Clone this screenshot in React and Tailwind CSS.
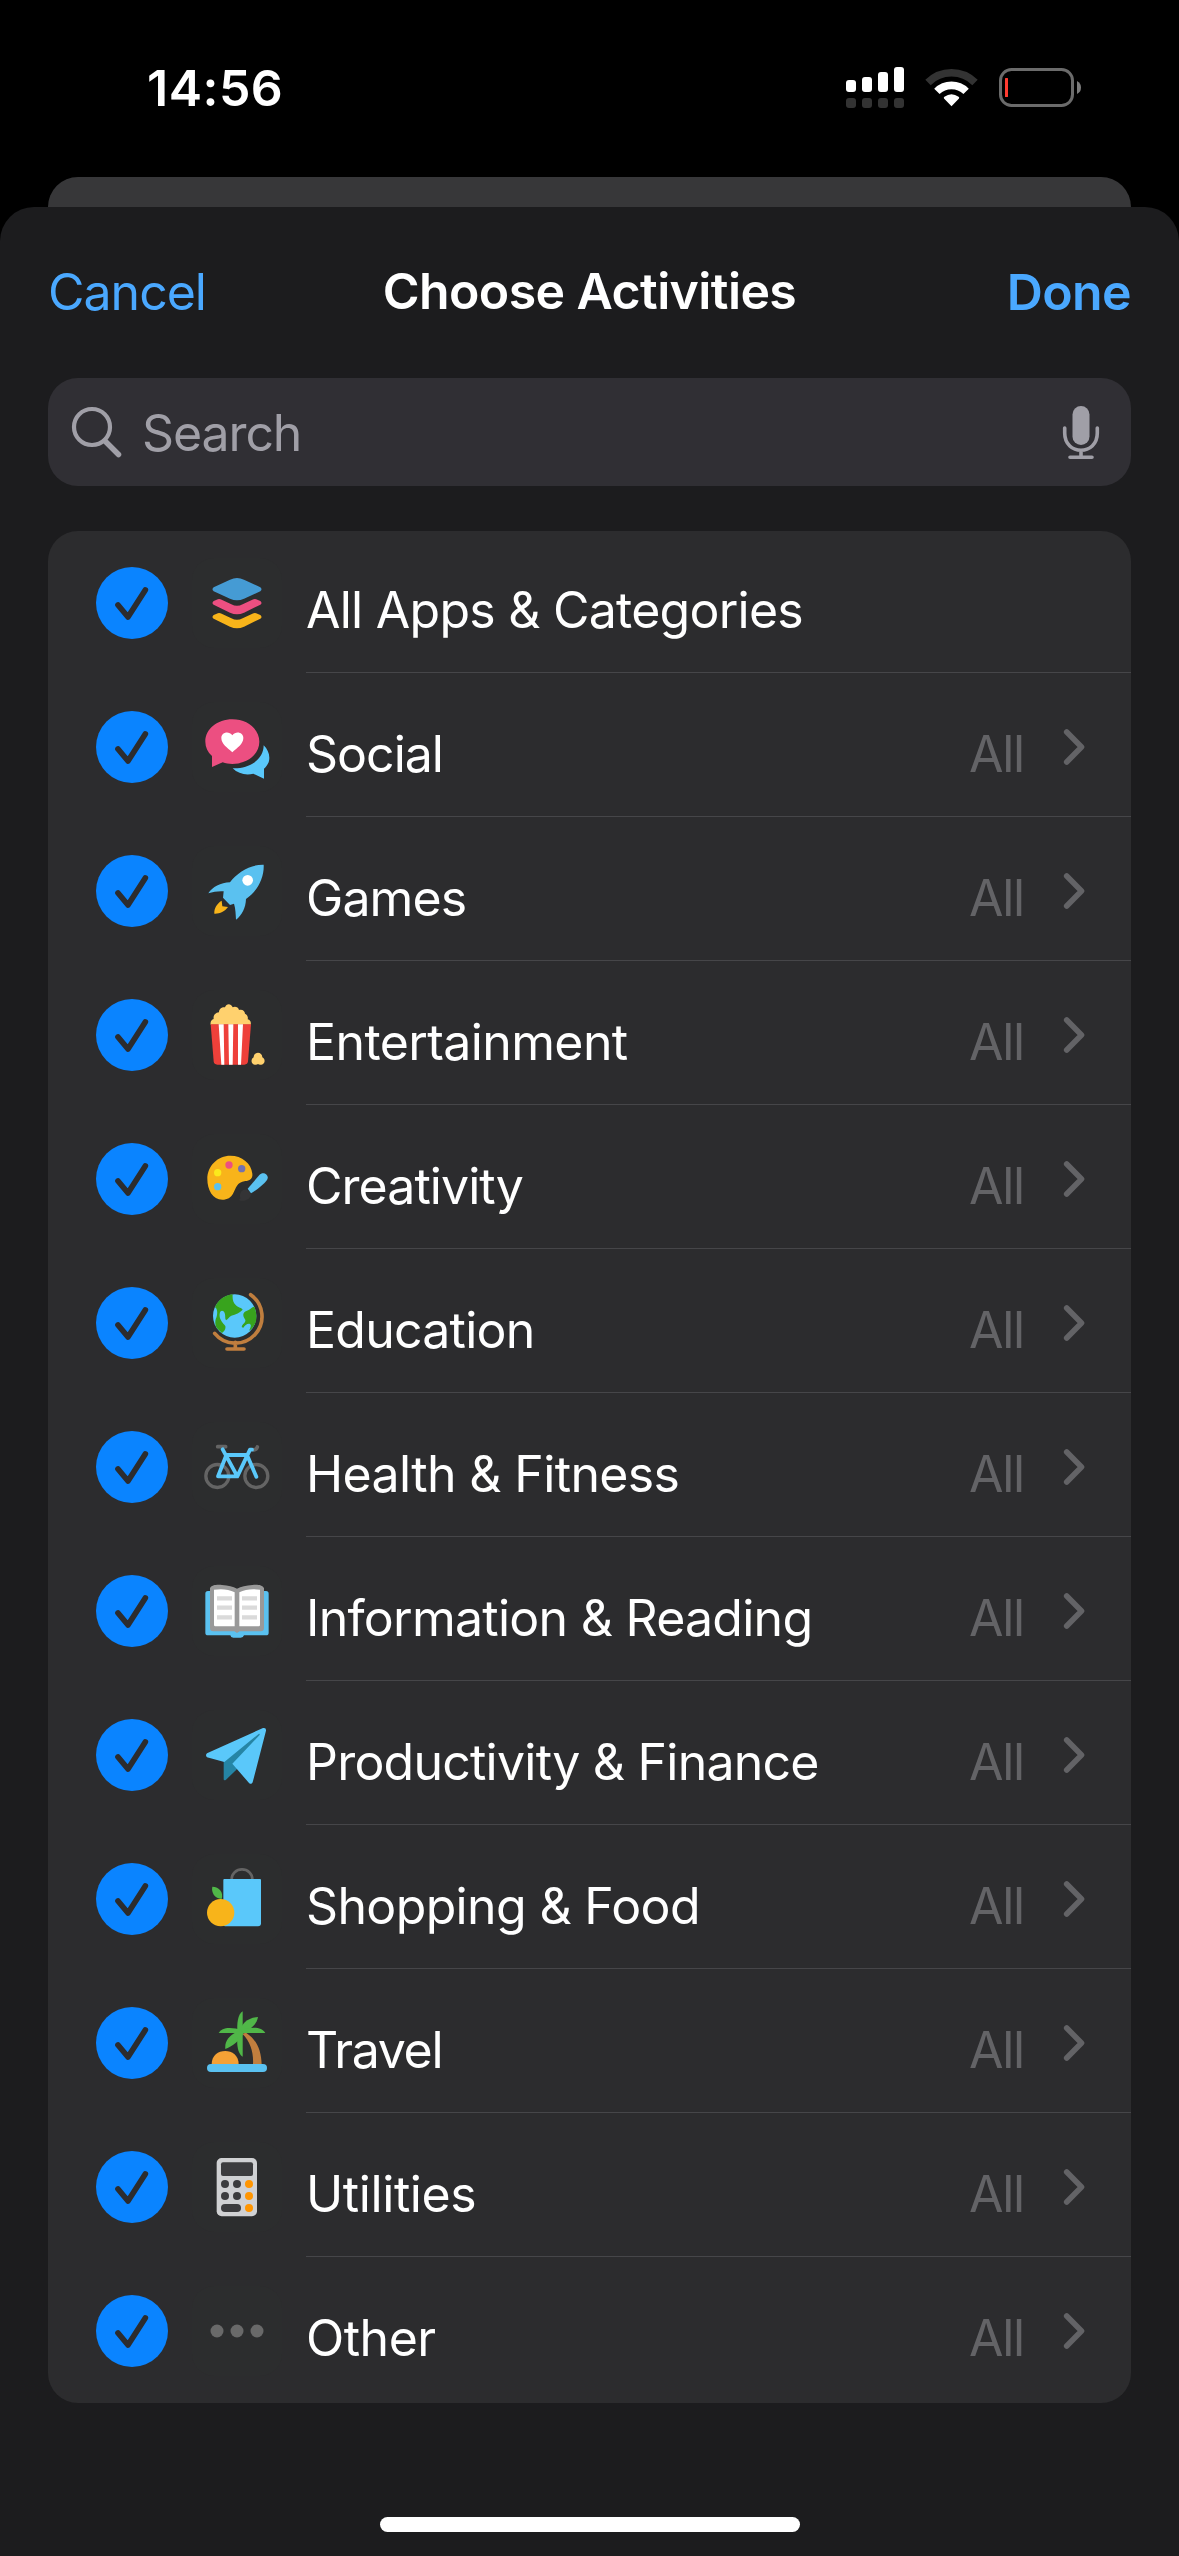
import { useState } from "react";

const CATEGORIES = [
  { id: "all", name: "All Apps & Categories", tracking: "tracking-[-0.75px]" },
  { id: "social", name: "Social", value: "All", tracking: "tracking-[-1px]" },
  { id: "games", name: "Games", value: "All", tracking: "tracking-[-0.9px]" },
  { id: "entertainment", name: "Entertainment", value: "All", tracking: "tracking-[-0.6px]" },
  { id: "creativity", name: "Creativity", value: "All", tracking: "tracking-[-0.95px]" },
  { id: "education", name: "Education", value: "All", tracking: "tracking-[-0.75px]" },
  { id: "health", name: "Health & Fitness", value: "All", tracking: "tracking-[-0.63px]" },
  { id: "reading", name: "Information & Reading", value: "All", tracking: "tracking-[-0.74px]" },
  { id: "productivity", name: "Productivity & Finance", value: "All", tracking: "tracking-[-0.77px]" },
  { id: "shopping", name: "Shopping & Food", value: "All", tracking: "tracking-[-0.65px]" },
  { id: "travel", name: "Travel", value: "All", tracking: "tracking-[-1.3px]" },
  { id: "utilities", name: "Utilities", value: "All", tracking: "tracking-[-0.4px]" },
  { id: "other", name: "Other", value: "All", tracking: "tracking-[-0.5px]" },
];

const ICONS = {
  all: {
    viewBox: "456 114 270 270",
    art: (
      <>
        <path fill="#459bd4" d="M521 202 570 179Q591 169 612 179L661 202Q668 208 661 214L612 236Q591 246 570 236L521 214Q514 208 521 202Z" />
        <path fill="#ec4f81" d="M530 239Q537 235 545 239L574 253Q591 262 608 253L637 239Q645 235 652 239L661 243Q668 249 661 254L612 278Q591 287 570 278L521 254Q514 249 521 243Z" />
        <path fill="#f8b41a" d="M530 281Q537 277 545 281L574 295Q591 304 608 295L637 281Q645 277 652 281L661 285Q668 291 661 296L612 320Q591 329 570 320L521 296Q514 291 521 285Z" />
      </>
    ),
  },
  social: {
    viewBox: "6 6 270 270",
    art: (
      <>
        <path fill="#ec4f81" d="M127 58C172 58 208 87 208 125S172 192 127 192C117 192 107 190 98 187L66 201V168C53 156 46 141 46 125 46 87 82 58 127 58Z" />
        <path fill="#fff" d="M127 157C112 143 94 132 94 114 94 97 116 91 127 106 138 91 160 97 160 114 160 132 142 143 127 157Z" />
        <path fill="#5ac8fa" d="M221 136C232 147 238 160 238 173 238 187 232 197 222 206V236L190 221C168 227 144 221 128 205 176 207 221 180 221 136Z" />
      </>
    ),
  },
  games: {
    viewBox: "6 438 270 270",
    art: (
      <>
        <path fill="#5ac1f0" d="M221 494C223 529 205 572 168 597 167 624 156 646 138 659 137 642 137 628 132 611L120 615 99 593 101 574C86 573 70 575 55 580 67 561 92 548 120 547 143 515 184 493 221 494Z" />
        <circle cx="173" cy="541" r="16" fill="#fff" />
        <path fill="#f8b41a" d="M95 602 97 619 114 621C104 635 88 642 73 641 72 625 81 610 95 602Z" />
      </>
    ),
  },
  entertainment: {
    viewBox: "6 30 270 270",
    art: (
      <>
        <path fill="#ffd16e" d="M62 134C60 125 65 119 71 117 69 107 76 98 87 97 87 87 95 80 105 82 109 70 123 70 128 82 136 78 145 82 147 90 157 87 165 93 165 101 172 104 175 111 173 118 181 120 184 126 182 134Z" />
        <path fill="#ee403a" d="M62 133H183L174 244Q173 254 163 254H82Q72 254 71 244Z" />
        <path fill="#fff" d="M86 133H101L103 254H94ZM115 133H130L128 254H117ZM144 133H159L153 254H144Z" />
        <path fill="#ffd16e" d="M191 232C191 214 217 214 217 232 227 237 226 252 214 254 210 255 206 254 204 252 202 254 198 255 194 254 182 252 182 237 191 232Z" />
      </>
    ),
  },
  creativity: {
    viewBox: "6 462 270 270",
    art: (
      <>
        <path fill="#f8b41a" d="M187 581C189 597 178 602 166 603 139 607 139 624 129 641 123 652 112 659 97 659 68 659 52 630 52 597 52 557 84 527 121 527 156 527 184 550 187 581Z" />
        <circle cx="117" cy="555" r="11" fill="#ec4f81" />
        <circle cx="155" cy="566" r="11" fill="#7272b0" />
        <circle cx="83" cy="578" r="11" fill="#fbe91c" />
        <circle cx="83" cy="620" r="11" fill="#5ac1f0" />
        <path fill="#5ac1f0" d="M173 626 208 585C220 572 240 586 231 600 221 614 202 628 183 640Z" />
        <path fill="#343436" d="M170 628 183 641C183 653 172 664 151 662 147 661 147 658 151 655 146 638 158 628 170 628Z" />
      </>
    ),
  },
  education: {
    viewBox: "6 24 270 270",
    art: (
      <>
        <circle cx="134" cy="138" r="65" fill="#5ac8fa" />
        <path fill="#38a31d" d="M128 73C102 75 83 92 75 112 84 117 83 135 77 148 74 160 77 171 83 177L96 189C103 184 108 177 106 168 98 158 87 148 89 132 90 120 100 119 104 129 107 137 104 145 108 151 115 147 117 140 124 137 137 134 150 128 158 119 155 113 146 114 137 105 129 97 127 87 128 73ZM193 110C199 122 201 145 197 157 191 172 184 180 177 182 183 173 185 163 178 161 171 160 164 166 160 173 153 174 155 168 159 163 167 156 168 151 164 146 157 137 158 126 171 122 181 119 187 109 193 110Z" />
        <path fill="none" stroke="#c07e3e" strokeWidth="11" strokeLinecap="round" d="M182 74A80 80 0 1 1 74 190M136 217V237M111 237H162" />
      </>
    ),
  },
  health: {
    viewBox: "6 456 270 270",
    art: (
      <g fill="none" strokeLinejoin="round" strokeLinecap="round">
        <g stroke="#646464" strokeWidth="10">
          <circle cx="82" cy="618" r="34.5" />
          <circle cx="199" cy="618" r="34.5" />
          <path strokeWidth="11" d="M83 530H107M189 539Q199 541 202 531" />
        </g>
        <path stroke="#5ac8fa" strokeWidth="11.5" d="M98 538 142 619H84L109 555H171L199 620M142 619 180 539H186" />
      </g>
    ),
  },
  reading: {
    viewBox: "6 18 270 270",
    art: (
      <>
        <path fill="#5ac1f0" d="M54 93H228Q236 93 236 101V218Q236 226 228 226H162Q160 233 152 233H130Q122 233 121 226H54Q46 226 46 218V101Q46 93 54 93Z" />
        <path fill="#999" d="M60 85C64 74 82 74 96 75 115 76 129 80 141 86 153 80 169 76 187 75 202 74 217 74 222 85V204Q222 214 212 214H149L141 219 133 214H70Q60 214 60 204Z" />
        <path fill="#fff" d="M72 89C94 86 116 87 134 97V199H76Q72 199 72 195ZM148 97C166 87 188 86 210 89V195Q210 199 206 199H148Z" />
        <path stroke="#dadada" strokeWidth="13" d="M81 115H126M81 143H126M81 172H126M156 115H201M156 143H201M156 172H201" />
      </>
    ),
  },
  productivity: {
    viewBox: "6 450 270 270",
    art: (
      <>
        <path fill="#2585a5" d="M101 602 205 518 213 524 139 629 108 659Q101 664 101 656Z" />
        <path fill="#5ac8fa" d="M219 504Q229 502 228 512L188 667Q184 675 177 669L127 611 208 526Q211 522 207 521L103 606 51 592Q45 586 51 580Z" />
      </>
    ),
  },
  shopping: {
    viewBox: "6 12 270 270",
    art: (
      <>
        <path fill="none" stroke="#646464" strokeWidth="8" d="M125 92V87A31 29 0 0 1 187 87V92" />
        <path fill="#5ac8fa" d="M103 87H210Q213 87 213 90V220Q213 229 204 229H108Q100 229 100 221V90Q100 87 103 87Z" />
        <circle cx="92" cy="188" r="41" fill="#f8b41a" />
        <path fill="#50b748" d="M67 110C88 110 101 127 95 147 74 145 63 128 67 110Z" />
      </>
    ),
  },
  travel: {
    viewBox: "6 444 270 270",
    art: (
      <>
        <path fill="#c07e3e" d="M157 551 168 548C200 568 214 602 215 643H189C191 606 181 575 157 551Z" />
        <path fill="#f5a135" d="M65 643C64 590 147 590 146 643Z" />
        <rect x="51" y="642" width="180" height="24" rx="12" fill="#5ac1f0" />
        <g fill="#50b748">
          <path d="M158 484V550H142C141 522 142 494 158 484Z" />
          <path d="M204 501C201 521 182 541 154 549L147 545C155 521 173 502 204 501Z" />
          <path d="M86 549C95 532 121 529 158 541V549Z" />
          <path d="M226 549H153V541C184 529 215 530 226 549Z" />
          <path d="M106 597C103 572 120 552 151 541L161 548C151 571 129 587 106 597Z" />
          <path d="M158 620C141 609 139 576 144 548L158 545Z" />
        </g>
      </>
    ),
  },
  utilities: {
    viewBox: "6 36 270 270",
    art: (
      <>
        <rect x="80" y="84" width="121" height="175" rx="15" fill="#d0d1d3" />
        <rect x="93" y="97" width="96" height="41" rx="6" fill="#3c3c3e" />
        <g fill="#3c3c3e">
          <circle cx="105" cy="162" r="12" />
          <circle cx="141" cy="162" r="12" />
          <circle cx="105" cy="198" r="12" />
          <circle cx="141" cy="198" r="12" />
          <rect x="93" y="222" width="60" height="24" rx="12" />
        </g>
        <g fill="#ff9500">
          <circle cx="177" cy="162" r="12" />
          <circle cx="177" cy="198" r="12" />
          <circle cx="177" cy="234" r="12" />
        </g>
      </>
    ),
  },
  other: {
    viewBox: "6 468 270 270",
    art: (
      <g fill="#696969">
        <circle cx="81" cy="603" r="19.5" />
        <circle cx="141" cy="603" r="19.5" />
        <circle cx="201" cy="603" r="19.5" />
      </g>
    ),
  },
};

function StatusBar() {
  return (
    <div className="flex h-[177px] items-start justify-between pt-[60px] pr-[97px] pl-[147px]">
      <span className="text-[50px] leading-[56px] font-semibold tracking-[0.5px] text-white">14:56</span>
      <svg className="mt-[6px]" width="236" height="42" viewBox="846 66 236 42">
        <g fill="#fff">
          <rect x="846" y="80" width="10" height="12" rx="3" />
          <rect x="862" y="77" width="10" height="15" rx="3" />
          <rect x="878" y="72" width="10" height="20" rx="3" />
          <rect x="894" y="67" width="10" height="25" rx="3" />
        </g>
        <g fill="#333">
          <rect x="846" y="98" width="10" height="10" rx="3" />
          <rect x="862" y="98" width="10" height="10" rx="3" />
          <rect x="878" y="98" width="10" height="10" rx="3" />
          <rect x="894" y="98" width="10" height="10" rx="3" />
        </g>
        <path d="M928 82.5A33.3 33.3 0 0 1 975 82.5" fill="none" stroke="#333" strokeWidth="7.6" />
        <path d="M936.9 91.4A20.7 20.7 0 0 1 966.1 91.4" fill="none" stroke="#fff" strokeWidth="7.6" />
        <path d="M951.5 106.3 944 98.6Q943.4 97.5 944.4 96.8Q951.5 91.6 958.6 96.8Q959.6 97.5 959 98.6Z" fill="#fff" />
        <rect x="1000.5" y="69.5" width="72" height="36" rx="11" fill="none" stroke="#6b6b6b" strokeWidth="3" />
        <rect x="1005" y="78" width="3" height="19" rx="0.5" fill="#ff3b30" />
        <path d="M1077 81Q1081 83 1081 87.5Q1081 92 1077 94Z" fill="#7c7c7c" />
      </svg>
    </div>
  );
}

function SearchBar() {
  return (
    <div className="mx-12 flex h-[108px] items-center rounded-[30px] bg-[#302f34] pr-[30px] pl-[22px]">
      <svg width="54" height="54" viewBox="0 0 54 54" fill="none" stroke="#a09fa7" strokeLinecap="round">
        <circle cx="22" cy="22" r="18" strokeWidth="4.2" />
        <path d="M35 36 48.5 49.5" strokeWidth="5.5" />
      </svg>
      <span className="flex-1 pt-[2px] pl-[18px] text-[50px] leading-[60px] tracking-[-1.1px] text-[#a09fa7]">Search</span>
      <svg width="40" height="56" viewBox="0 0 40 56" fill="none" stroke="#a09fa7" strokeLinecap="round">
        <rect x="11.5" y="2" width="17" height="39" rx="8.5" fill="#a09fa7" stroke="none" />
        <path d="M3.7 24V29C3.7 52 36.3 52 36.3 29V24M20 47V53M9 53.3H31" strokeWidth="3.6" />
      </svg>
    </div>
  );
}

function CategoryRow({ item, checked, last, onToggle }) {
  const icon = ICONS[item.id];

  return (
    <li className="flex h-36 items-center pl-12">
      <button onClick={onToggle} aria-label={item.name} className="size-[72px] shrink-0">
        <svg className="size-full" viewBox="168 141 216 216">
          <circle cx="276" cy="249" r="108" fill={checked ? "#0a84ff" : "#48484a"} />
          {checked && (
            <path d="M234 255 264 291 316 210" fill="none" stroke="#2c2c2e" strokeWidth="17" strokeLinecap="round" strokeLinejoin="round" />
          )}
        </svg>
      </button>
      <div className="ml-6 size-[90px] shrink-0 overflow-hidden rounded-[22px] bg-[#2c2d2e]">
        <svg className="size-full" viewBox={icon.viewBox}>
          {icon.art}
        </svg>
      </div>
      <div className="ml-6 flex h-full flex-1 flex-col">
        <div className="flex h-[141px] items-center pt-[3px] pr-[45px]">
          <span className={`flex-1 pt-[14px] text-[50px] leading-[60px] whitespace-nowrap text-white ${item.tracking}`}>
            {item.name}
          </span>
          {item.value && (
            <>
              <span className="pt-[14px] text-[50px] leading-[60px] tracking-[-1.2px] text-[#636366]">{item.value}</span>
              <svg className="ml-[39px]" width="23" height="38" viewBox="0 0 23 38">
                <path d="M3.7 4 18.5 19 3.7 34" fill="none" stroke="#636366" strokeWidth="5.6" strokeLinecap="round" strokeLinejoin="round" />
              </svg>
            </>
          )}
        </div>
        {!last && <div className="h-px bg-[#464649]" />}
      </div>
    </li>
  );
}

export default function App() {
  const [selected, setSelected] = useState(CATEGORIES.map((c) => c.id));

  function toggle(id) {
    setSelected((prev) => (prev.includes(id) ? prev.filter((x) => x !== id) : [...prev, id]));
  }

  return (
    <div className="flex h-[2556px] w-[1179px] flex-col overflow-hidden bg-black font-['Inter',sans-serif]">
      <StatusBar />
      <div className="mx-12 h-[60px] shrink-0 rounded-t-[30px] bg-[#373739]" />

      <div className="-mt-[30px] flex flex-1 flex-col rounded-t-[34px] bg-[#1c1c1e]">
        <header className="grid h-[171px] grid-cols-[1fr_auto_1fr] items-center px-12 pb-[2px] text-[50px] leading-[60px]">
          <button className="text-left tracking-[-1px] text-[#4aa8ff]">Cancel</button>
          <h1 className="pb-[2px] font-semibold tracking-[-0.6px] text-white">Choose Activities</h1>
          <button className="text-right font-semibold tracking-[-0.6px] text-[#4aa8ff]">Done</button>
        </header>

        <SearchBar />

        <ul className="mx-12 mt-[45px] rounded-[30px] bg-[#2c2c2e]">
          {CATEGORIES.map((item, i) => (
            <CategoryRow
              key={item.id}
              item={item}
              checked={selected.includes(item.id)}
              last={i === CATEGORIES.length - 1}
              onToggle={() => toggle(item.id)}
            />
          ))}
        </ul>

        <div className="mx-auto mt-auto mb-6 h-[15px] w-[420px] rounded-full bg-white" />
      </div>
    </div>
  );
}
